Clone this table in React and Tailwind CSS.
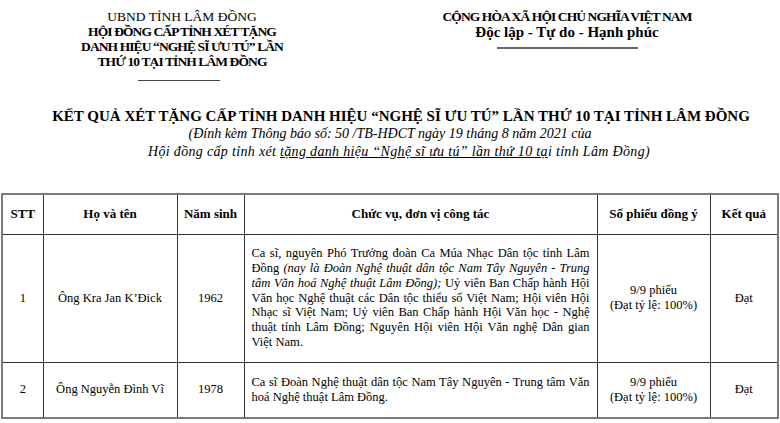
import React from "react";

const serif = { fontFamily: '"Liberation Serif", "Times New Roman", serif' };

function JLine({ children, last }) {
  return (
    <div className={last ? "text-left whitespace-nowrap" : "text-justify [text-align-last:justify] whitespace-nowrap"}>
      {children}
    </div>
  );
}

export default function App() {
  return (
    <div className="w-[780px] h-[423px] bg-white text-black overflow-hidden relative" style={serif}>
      {/* Header */}
      <div className="flex pt-[9px]">
        <div className="w-[364px] flex flex-col items-center">
          <div className="text-[13.5px] leading-[15px]">UBND TỈNH LÂM ĐỒNG</div>
          <div className="text-[13.5px] leading-[15px] font-bold tracking-[-0.9px]">HỘI ĐỒNG CẤP TỈNH XÉT TẶNG</div>
          <div className="text-[13.5px] leading-[15px] font-bold tracking-[-0.9px]">DANH HIỆU “NGHỆ SĨ ƯU TÚ” LẦN</div>
          <div className="text-[13.5px] leading-[15px] font-bold tracking-[-0.9px]">THỨ 10 TẠI TỈNH LÂM ĐỒNG</div>
          <div className="w-[82px] h-px bg-[#444] mt-[11px] -ml-[6px]" />
        </div>
        <div className="flex-1 flex flex-col items-center pr-[10px]">
          <div className="text-[13.5px] leading-[15px] font-bold tracking-[-0.9px]">CỘNG HÒA XÃ HỘI CHỦ NGHĨA VIỆT NAM</div>
          <div className="text-[15px] leading-[17px] font-bold">Độc lập - Tự do - Hạnh phúc</div>
          <div className="w-[141px] h-[2px] bg-[#666] mt-[6px] shrink-0" />
        </div>
      </div>

      {/* Title */}
      <div className="mt-[26px] flex flex-col items-center">
        <div className="text-[15px] leading-[18px] font-bold pl-[22px]">
          KẾT QUẢ XÉT TẶNG CẤP TỈNH DANH HIỆU “NGHỆ SĨ ƯU TÚ” LẦN THỨ 10 TẠI TỈNH LÂM ĐỒNG
        </div>
        <div className="text-[14px] leading-[18px] italic">
          (Đính kèm Thông báo số: 50 /TB-HĐCT ngày 19 tháng 8 năm 2021 của
        </div>
        <div className="text-[14px] leading-[18px] italic tracking-[0.33px] pl-[18px]">
          Hội đồng cấp tỉnh xét <span className="underline">tặng danh hiệu “Nghệ sĩ ưu tú” lần thứ 10 tạ</span>i tỉnh Lâm Đồng)
        </div>
      </div>

      {/* Table */}
      <div className="mt-[32px] pl-[1px]">
        <table className="table-fixed border-collapse border-2 border-[#7a7a7a] text-[12.5px] leading-[14.8px]">
          <colgroup>
            <col className="w-[41px]" />
            <col className="w-[134px]" />
            <col className="w-[67px]" />
            <col className="w-[353px]" />
            <col className="w-[113px]" />
            <col className="w-[68px]" />
          </colgroup>
          <thead>
            <tr className="h-[40px] font-bold text-[13px]">
              <th className="border border-[#333] text-center font-bold">STT</th>
              <th className="border border-[#333] text-center font-bold">Họ và tên</th>
              <th className="border border-[#333] text-center font-bold">Năm sinh</th>
              <th className="border border-[#333] text-center font-bold">Chức vụ, đơn vị công tác</th>
              <th className="border border-[#333] text-center font-bold">Số phiếu đồng ý</th>
              <th className="border border-[#333] text-center font-bold">Kết quả</th>
            </tr>
          </thead>
          <tbody>
            <tr className="h-[128px]">
              <td className="border border-[#333] text-center align-middle">1</td>
              <td className="border border-[#333] text-center align-middle">Ông Kra Jan K’Đick</td>
              <td className="border border-[#333] text-center align-middle">1962</td>
              <td className="border border-[#333] align-middle px-[7px]">
                <JLine>Ca sĩ, nguyên Phó Trưởng đoàn Ca Múa Nhạc Dân tộc tỉnh Lâm</JLine>
                <JLine>Đồng <i>(nay là Đoàn Nghệ thuật dân tộc Nam Tây Nguyên - Trung</i></JLine>
                <JLine><i>tâm Văn hoá Nghệ thuật Lâm Đồng);</i> Uỷ viên Ban Chấp hành Hội</JLine>
                <JLine>Văn học Nghệ thuật các Dân tộc thiểu số Việt Nam; Hội viên Hội</JLine>
                <JLine>Nhạc sĩ Việt Nam; Uỷ viên Ban Chấp hành Hội Văn học - Nghệ</JLine>
                <JLine>thuật tỉnh Lâm Đồng; Nguyên Hội viên Hội Văn nghệ Dân gian</JLine>
                <JLine last>Việt Nam.</JLine>
              </td>
              <td className="border border-[#333] text-center align-middle">
                <div>9/9 phiếu</div>
                <div>(Đạt tỷ lệ: 100%)</div>
              </td>
              <td className="border border-[#333] text-center align-middle">Đạt</td>
            </tr>
            <tr className="h-[56px]">
              <td className="border border-[#333] text-center align-middle">2</td>
              <td className="border border-[#333] text-center align-middle">Ông Nguyễn Đình Vĩ</td>
              <td className="border border-[#333] text-center align-middle">1978</td>
              <td className="border border-[#333] align-middle px-[7px]">
                <JLine>Ca sĩ Đoàn Nghệ thuật dân tộc Nam Tây Nguyên - Trung tâm Văn</JLine>
                <JLine last>hoá Nghệ thuật Lâm Đồng.</JLine>
              </td>
              <td className="border border-[#333] text-center align-middle">
                <div>9/9 phiếu</div>
                <div>(Đạt tỷ lệ: 100%)</div>
              </td>
              <td className="border border-[#333] text-center align-middle">Đạt</td>
            </tr>
          </tbody>
        </table>
      </div>
    </div>
  );
}
